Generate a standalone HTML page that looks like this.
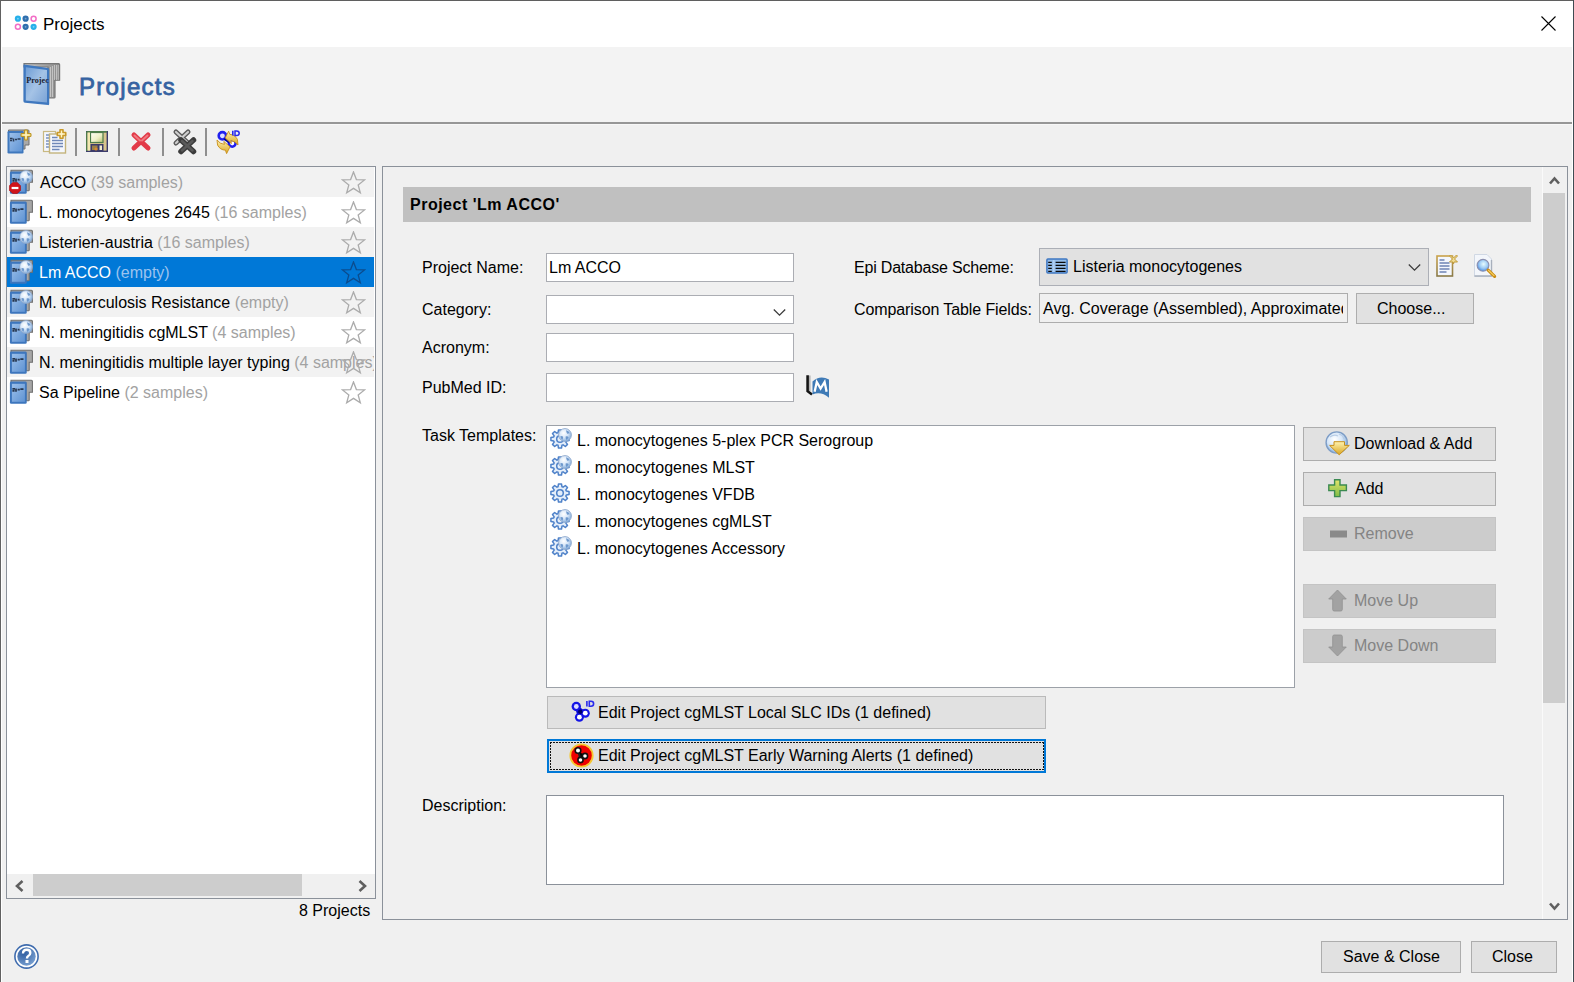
<!DOCTYPE html>
<html><head><meta charset="utf-8">
<style>
*{box-sizing:border-box;margin:0;padding:0}
html,body{width:1574px;height:982px;overflow:hidden;background:#f0f0f0;font-family:"Liberation Sans",sans-serif;font-size:16px;color:#000}
.a{position:absolute}
.t{position:absolute;line-height:20px;white-space:nowrap;font-size:16px}
.g{color:#a2a2a2}
.fld{position:absolute;background:#fff;border:1px solid #abadb3}
.btn{position:absolute;background:#e1e1e1;border:1px solid #adadad}
.dis{position:absolute;background:#cccccc;border:1px solid #c4c4c4}
.row{position:absolute;left:7px;width:367px;height:30px}
svg{position:absolute;overflow:visible;color:#acacac}
</style></head><body>
<svg width="0" height="0" style="position:absolute">
<defs>
<linearGradient id="gBlue" x1="0" y1="0" x2="1" y2="1"><stop offset="0" stop-color="#9cc0ea"/><stop offset="1" stop-color="#5f93d3"/></linearGradient>
<radialGradient id="gGlobe" cx="0.4" cy="0.35" r="0.7"><stop offset="0" stop-color="#ffffff"/><stop offset="0.5" stop-color="#d6e6f8"/><stop offset="1" stop-color="#7aa6d8"/></radialGradient>
<linearGradient id="gGold" x1="0" y1="0" x2="0" y2="1"><stop offset="0" stop-color="#fff3b0"/><stop offset="1" stop-color="#d9a520"/></linearGradient>
<radialGradient id="gHelp" cx="0.35" cy="0.3" r="0.8"><stop offset="0" stop-color="#2f5da0"/><stop offset="1" stop-color="#7ca3d3"/></radialGradient>
<symbol id="book" viewBox="0 0 25 26">
 <path d="M2 1.2 H22.4 Q23.4 1.2 23.4 2.2 V13.2 H20.2 V21 Q20.2 21.8 19.4 21.8 H17 V4 H2Z" fill="#a6a6a6" stroke="#6f6f6f" stroke-width="1.1"/>
 <rect x="0.9" y="2.6" width="16.8" height="22.2" rx="1.3" fill="#3d76bd"/>
 <rect x="2.9" y="4.8" width="13" height="18" fill="url(#gBlue)"/>
 <path d="M3.4 9.8h2.6M3.4 11.8h2.2M7 9.6v3.2M8.6 10.6h2.2M11.3 10.2h3.2" stroke="#26364e" stroke-width="1.7"/>
</symbol>
<symbol id="globe" viewBox="0 0 14 14">
 <circle cx="7" cy="7" r="6.4" fill="url(#gGlobe)" stroke="#8ea8cc" stroke-width="0.9"/>
 <path d="M2.2 8.5 Q4 7.2 5.2 9 L4.6 11.8 Q2.8 10.8 2.2 8.5Z M8 2.2 Q10.8 2.6 11.8 5.2 L9.2 5.8 Q8.4 4.2 8 2.2Z M7.6 8.4 Q9.8 7.6 10.6 9.6 L8.6 12 Q7.4 10.4 7.6 8.4Z" fill="#5d8cc6" opacity="0.85"/>
</symbol>
<symbol id="star" viewBox="0 0 25 25">
 <polygon points="12.50,0.90 15.38,8.54 23.53,8.92 17.16,14.01 19.32,21.88 12.50,17.40 5.68,21.88 7.84,14.01 1.47,8.92 9.62,8.54" fill="none" stroke="currentColor" stroke-width="1.3" stroke-linejoin="miter"/>
</symbol>
<symbol id="gear" viewBox="0 0 22 22">
 <polygon points="9.06,4.69 9.49,1.92 12.51,1.92 12.94,4.69 14.09,5.17 16.35,3.51 18.49,5.65 16.83,7.91 17.31,9.06 20.08,9.49 20.08,12.51 17.31,12.94 16.83,14.09 18.49,16.35 16.35,18.49 14.09,16.83 12.94,17.31 12.51,20.08 9.49,20.08 9.06,17.31 7.91,16.83 5.65,18.49 3.51,16.35 5.17,14.09 4.69,12.94 1.92,12.51 1.92,9.49 4.69,9.06 5.17,7.91 3.51,5.65 5.65,3.51 7.91,5.17" fill="#e4eefa" stroke="#4f82c9" stroke-width="1.5" stroke-linejoin="round"/>
 <circle cx="11" cy="11" r="3.3" fill="none" stroke="#4f82c9" stroke-width="1.5"/>
</symbol>
<symbol id="chev" viewBox="0 0 12 8"><path d="M1 1.5 L6 6.5 L11 1.5" fill="none" stroke="#444" stroke-width="1.3"/></symbol>
<symbol id="sarr" viewBox="0 0 11 9"><path d="M1 7.5 L5.5 2.5 L10 7.5" fill="none" stroke="#5f5f5f" stroke-width="2.6"/></symbol>
</defs></svg>
<!-- window frame -->
<div class="a" style="left:0;top:0;width:1574px;height:1px;background:#5f5f5f"></div>
<div class="a" style="left:0;top:0;width:1px;height:982px;background:#616161"></div>
<div class="a" style="left:1573px;top:0;width:1px;height:982px;background:#3f4b52"></div>
<div class="a" style="left:1px;top:1px;width:1px;height:981px;background:#fff"></div>
<div class="a" style="left:1572px;top:1px;width:1px;height:981px;background:#fff"></div>
<!-- title bar -->
<div class="a" style="left:1px;top:1px;width:1572px;height:46px;background:#fff"></div>
<div class="t" style="left:43px;top:15px;font-size:17px">Projects</div>
<!-- header -->
<div class="a" style="left:2px;top:47px;width:1570px;height:75px;background:#f3f3f3"></div>
<div class="t" style="left:79px;top:73px;font-size:24px;line-height:28px;color:#3562a1;-webkit-text-stroke:0.8px #3562a1;letter-spacing:1.3px">Projects</div>
<div class="a" style="left:2px;top:122px;width:1570px;height:2px;background:#969696"></div>
<div class="a" style="left:2px;top:124px;width:1570px;height:1px;background:#f7f7f7"></div>
<!-- toolbar separators -->
<div class="a" style="left:75px;top:128px;width:2px;height:28px;background:#8f8f8f"></div>
<div class="a" style="left:118px;top:128px;width:2px;height:28px;background:#8f8f8f"></div>
<div class="a" style="left:162px;top:128px;width:2px;height:28px;background:#8f8f8f"></div>
<div class="a" style="left:205px;top:128px;width:2px;height:28px;background:#8f8f8f"></div>


<!-- left panel -->
<div class="a" style="left:6px;top:166px;width:370px;height:733px;border:1px solid #8b919a;background:#fff"></div>
<div class="row" style="top:167px;background:#f2f2f2"></div>
<div class="row" style="top:227px;background:#f2f2f2"></div>
<div class="row" style="top:257px;background:#0078d7"></div>
<div class="row" style="top:287px;background:#f2f2f2"></div>
<div class="row" style="top:347px;background:#f2f2f2"></div>
<div class="t" style="left:40px;top:173px">ACCO <span class="g">(39 samples)</span></div>
<div class="t" style="left:39px;top:203px">L. monocytogenes 2645 <span class="g">(16 samples)</span></div>
<div class="t" style="left:39px;top:233px">Listerien-austria <span class="g">(16 samples)</span></div>
<div class="t" style="left:39px;top:263px;color:#fff">Lm ACCO <span style="color:#9cc3ee">(empty)</span></div>
<div class="t" style="left:39px;top:293px">M. tuberculosis Resistance <span class="g">(empty)</span></div>
<div class="t" style="left:39px;top:323px">N. meningitidis cgMLST <span class="g">(4 samples)</span></div>
<div class="t" style="left:39px;top:353px;width:335px;overflow:hidden">N. meningitidis multiple layer typing <span class="g">(4 samples)</span></div>
<div class="t" style="left:39px;top:383px">Sa Pipeline <span class="g">(2 samples)</span></div>
<!-- h scrollbar -->
<div class="a" style="left:7px;top:874px;width:368px;height:24px;background:#f0f0f0"></div>
<div class="a" style="left:33px;top:874px;width:269px;height:22px;background:#cdcdcd"></div>
<div class="t" style="left:299px;top:901px">8 Projects</div>

<!-- right panel -->
<div class="a" style="left:382px;top:166px;width:1186px;height:754px;border:1px solid #8b919a;background:#f0f0f0"></div>
<div class="a" style="left:1542px;top:167px;width:1px;height:752px;background:#fafafa"></div>
<div class="a" style="left:1543px;top:193px;width:22px;height:510px;background:#cdcdcd"></div>
<div class="a" style="left:403px;top:187px;width:1128px;height:35px;background:#c0c0c0"></div>
<div class="t" style="left:410px;top:195px;font-weight:bold;letter-spacing:0.5px">Project 'Lm ACCO'</div>

<div class="t" style="left:422px;top:258px">Project Name:</div>
<div class="t" style="left:422px;top:300px">Category:</div>
<div class="t" style="left:422px;top:338px">Acronym:</div>
<div class="t" style="left:422px;top:378px">PubMed ID:</div>
<div class="t" style="left:422px;top:426px">Task Templates:</div>
<div class="t" style="left:422px;top:796px">Description:</div>
<div class="t" style="left:854px;top:258px;letter-spacing:-0.2px">Epi Database Scheme:</div>
<div class="t" style="left:854px;top:300px;letter-spacing:-0.1px">Comparison Table Fields:</div>

<div class="fld" style="left:546px;top:253px;width:248px;height:29px"></div>
<div class="t" style="left:549px;top:258px">Lm ACCO</div>
<div class="fld" style="left:546px;top:295px;width:248px;height:29px"></div>
<div class="fld" style="left:546px;top:333px;width:248px;height:29px"></div>
<div class="fld" style="left:546px;top:373px;width:248px;height:29px"></div>

<div class="btn" style="left:1039px;top:248px;width:390px;height:38px;border-color:#acafb6"></div>
<div class="t" style="left:1073px;top:257px">Listeria monocytogenes</div>
<div class="a" style="left:1039px;top:293px;width:309px;height:30px;border:1px solid #adadad;background:#f0f0f0"></div>
<div class="a" style="left:1040px;top:294px;width:303px;height:28px;overflow:hidden"><div class="t" style="left:3px;top:5px">Avg. Coverage (Assembled), Approximated Genome Size</div></div>
<div class="btn" style="left:1356px;top:293px;width:118px;height:31px"></div>
<div class="t" style="left:1377px;top:299px">Choose...</div>

<div class="a" style="left:546px;top:425px;width:749px;height:263px;border:1px solid #9ca1a8;background:#fff"></div>
<div class="t" style="left:577px;top:431px">L. monocytogenes 5-plex PCR Serogroup</div>
<div class="t" style="left:577px;top:458px">L. monocytogenes MLST</div>
<div class="t" style="left:577px;top:485px">L. monocytogenes VFDB</div>
<div class="t" style="left:577px;top:512px">L. monocytogenes cgMLST</div>
<div class="t" style="left:577px;top:539px">L. monocytogenes Accessory</div>

<div class="btn" style="left:1303px;top:427px;width:193px;height:34px"></div>
<div class="t" style="left:1354px;top:434px">Download &amp; Add</div>
<div class="btn" style="left:1303px;top:472px;width:193px;height:34px"></div>
<div class="t" style="left:1355px;top:479px">Add</div>
<div class="dis" style="left:1303px;top:517px;width:193px;height:34px"></div>
<div class="t" style="left:1354px;top:524px;color:#848484">Remove</div>
<div class="dis" style="left:1303px;top:584px;width:193px;height:34px"></div>
<div class="t" style="left:1354px;top:591px;color:#848484">Move Up</div>
<div class="dis" style="left:1303px;top:629px;width:193px;height:34px"></div>
<div class="t" style="left:1354px;top:636px;color:#848484">Move Down</div>

<div class="btn" style="left:547px;top:696px;width:499px;height:33px;border-color:#bababa"></div>
<div class="t" style="left:598px;top:703px">Edit Project cgMLST Local SLC IDs (1 defined)</div>
<div class="a" style="left:547px;top:739px;width:499px;height:34px;border:2px solid #0078d7;background:#e1e1e1"></div>
<div class="a" style="left:550px;top:742px;width:494px;height:1px;background:radial-gradient(circle at 1px 0.5px,#111 0.8px,transparent 1.3px) 0 0/3px 1px repeat-x"></div><div class="a" style="left:550px;top:769px;width:494px;height:1px;background:radial-gradient(circle at 1px 0.5px,#111 0.8px,transparent 1.3px) 0 0/3px 1px repeat-x"></div><div class="a" style="left:550px;top:742px;width:1px;height:28px;background:radial-gradient(circle at 0.5px 1px,#111 0.8px,transparent 1.3px) 0 0/1px 3px repeat-y"></div><div class="a" style="left:1043px;top:742px;width:1px;height:28px;background:radial-gradient(circle at 0.5px 1px,#111 0.8px,transparent 1.3px) 0 0/1px 3px repeat-y"></div>
<div class="t" style="left:598px;top:746px">Edit Project cgMLST Early Warning Alerts (1 defined)</div>

<div class="a" style="left:546px;top:795px;width:958px;height:90px;border:1px solid #8b919a;background:#fff"></div>

<!-- bottom -->

<div class="btn" style="left:1321px;top:941px;width:140px;height:32px"></div>
<div class="t" style="left:1343px;top:947px">Save &amp; Close</div>
<div class="btn" style="left:1471px;top:941px;width:86px;height:32px"></div>
<div class="t" style="left:1492px;top:947px">Close</div>
<!-- icons -->
<svg style="left:14px;top:15px" width="24" height="16" viewBox="0 0 24 16">
<circle cx="3.9" cy="3.7" r="3.1" fill="#27b0ea"/><circle cx="3.9" cy="3.7" r="0.9" fill="#7fd2f4"/>
<circle cx="11.6" cy="3.7" r="3.1" fill="#2f6fae"/><circle cx="11.6" cy="3.7" r="0.9" fill="#7ba3cc"/>
<circle cx="19.6" cy="3.7" r="2.5" fill="#fff" stroke="#f26ec6" stroke-width="1.5"/>
<circle cx="3.9" cy="11.8" r="2.5" fill="#fff" stroke="#f26ec6" stroke-width="1.5"/>
<circle cx="11.6" cy="11.8" r="3.1" fill="#2f6fae"/><circle cx="11.6" cy="11.8" r="0.9" fill="#7ba3cc"/>
<circle cx="19.6" cy="11.8" r="3.1" fill="#27b0ea"/><circle cx="19.6" cy="11.8" r="0.9" fill="#7fd2f4"/>
</svg>
<svg style="left:1541px;top:16px" width="15" height="15"><path d="M0.5 0.5L14.5 14.5M14.5 0.5L0.5 14.5" stroke="#000" stroke-width="1.1"/></svg>
<svg style="left:22px;top:62px" width="40" height="45" viewBox="0 0 40 45">
<defs><linearGradient id="gPages" x1="0" y1="0" x2="1" y2="0"><stop offset="0" stop-color="#c8c8c8"/><stop offset="1" stop-color="#8a8a8a"/></linearGradient>
<linearGradient id="gFront" x1="0" y1="0" x2="1" y2="1"><stop offset="0" stop-color="#6f9ed6"/><stop offset="0.5" stop-color="#a5c3e6"/><stop offset="1" stop-color="#7aa3d6"/></linearGradient></defs>
<path d="M2 1.6 H36.6 Q37.6 1.6 37.6 2.6 V18.2 H33 V35.2 Q33 36 32 36 H26 V5 H2Z" fill="url(#gPages)" stroke="#777" stroke-width="1.2"/>
<path d="M28.5 5 V35 M30.5 4 V35 M32.5 3 V18 M34.5 3 V18 M36.2 3 V18" stroke="#e8e8e8" stroke-width="0.7" opacity="0.8"/>
<path d="M2.2 2.6 L26 6 Q27.2 6.2 27.2 7.4 V42 Q27.2 43.3 26 43.1 L3 40.8 Q1.4 40.6 1.4 39 V3.6 Q1.4 2.5 2.2 2.6Z" fill="#3f78bf"/>
<path d="M3.8 5.2 L25 8 V40.6 L3.8 38.6Z" fill="url(#gFront)"/>
<text x="4.3" y="21" font-family="Liberation Serif" font-size="8.5" font-weight="bold" fill="#1a2232" textLength="22.5" lengthAdjust="spacingAndGlyphs">Projec</text>
</svg>
<svg style="left:7px;top:129px" width="24" height="25" viewBox="0 0 24 25">
 <path d="M1.5 1 H21 Q22 1 22 2 V16 H18 V20 H16 V3 H1.5Z" fill="#a9a9a9" stroke="#727272" stroke-width="1"/>
 <rect x="0.5" y="2" width="16" height="22.5" rx="1.2" fill="#3f78bd"/>
 <rect x="2.5" y="4" width="12.5" height="18.5" fill="url(#gBlue)"/>
 <path d="M3 9.5h2.5M3 11.5h2M6.5 9.5v3M8 10.5h2M10.5 10h3" stroke="#2a3b55" stroke-width="1.6"/>
 <path d="M17.6 1 H20.4 V4.6 H24 V7.4 H20.4 V11 H17.6 V7.4 H14 V4.6 H17.6Z" fill="#f3dc80" stroke="#b8901c" stroke-width="1" stroke-linejoin="round"/><path d="M19 2.5 V9.5 M15.5 6 H22.5" stroke="#fff8d0" stroke-width="1"/>
</svg>
<svg style="left:43px;top:129px" width="24" height="25" viewBox="0 0 24 25">
 <rect x="0.5" y="2.5" width="12" height="20" fill="#f4f7fd" stroke="#c9b981" stroke-width="1.2"/>
 <path d="M3 6h5M3 9h5M3 12h5M3 15h5M3 18h5" stroke="#7a92c0" stroke-width="1.3"/>
 <rect x="6.5" y="5" width="16" height="19" fill="#f4f7fd" stroke="#c4b47c" stroke-width="1.4"/>
 <path d="M9 8.5h5.5M9 11.5h11M9 14.5h11M9 17.5h11M9 20.5h7.5" stroke="#6f88b8" stroke-width="1.4"/>
 <path d="M17 0.8 H20 V3.5 H22.7 V6.5 H20 V9.2 H17 V6.5 H14.3 V3.5 H17Z" fill="#fff4c8" stroke="#c99a2a" stroke-width="1.6" stroke-linejoin="round"/>
</svg>
<svg style="left:86px;top:131px" width="22" height="21" viewBox="0 0 22 21">
 <rect x="0.7" y="0.7" width="20.6" height="19.6" fill="#d8c48c" stroke="#3c3c6c" stroke-width="1.4"/>
 <path d="M0.7 0.7 V20 M0.7 0.7 H21" stroke="#4d7c4b" stroke-width="1.4"/>
 <defs><linearGradient id="gLbl" x1="0" y1="0" x2="1" y2="1"><stop offset="0" stop-color="#fffef6"/><stop offset="0.55" stop-color="#eef0c8"/><stop offset="1" stop-color="#b8c070"/></linearGradient></defs><rect x="4.5" y="1.5" width="12.5" height="10" fill="url(#gLbl)" stroke="#4d7c4b" stroke-width="1.2"/>
 <rect x="4.5" y="13" width="13" height="7" fill="#3a3a6a"/>
 <rect x="6" y="14.5" width="5.5" height="4.5" fill="#9a8048"/><circle cx="10" cy="18" r="1.6" fill="#d88a30"/>
 <rect x="13.5" y="14.5" width="2.5" height="4.5" fill="#f2eccb"/>
 <rect x="1.5" y="1.5" width="2.5" height="18" fill="#f2e9b0"/>
</svg>
<svg style="left:131px;top:132px" width="20" height="19" viewBox="0 0 20 19">
 <path d="M3 3 L17 16 M17 3 L3 16" stroke="#e23a48" stroke-width="5" stroke-linecap="round"/>
 <path d="M3.5 3.5 L9 8.5 M16.5 3.5 L11 8.5" stroke="#f07a80" stroke-width="2" stroke-linecap="round"/>
</svg>
<svg style="left:173px;top:129px" width="24" height="25" viewBox="0 0 24 25">
 <path d="M3 3 L15 14 M15 3 L3 14" stroke="#5a5a5a" stroke-width="5" stroke-linecap="round"/>
 <path d="M3 3 L15 14 M15 3 L3 14" stroke="#cfcfcf" stroke-width="2.2" stroke-linecap="round"/>
 <path d="M8 11 L20.5 22.5 M20.5 11 L8 22.5" stroke="#3c3c3c" stroke-width="5.5" stroke-linecap="round"/>
 <path d="M9 12 L19.5 21.5 M19.5 12 L9 21.5" stroke="#5a5a5a" stroke-width="2.5" stroke-linecap="round"/>
</svg>
<svg style="left:216px;top:130px" width="25" height="25" viewBox="0 0 25 25">
 <circle cx="6.4" cy="5.8" r="3.7" fill="#dcdcff" stroke="#2020ee" stroke-width="2.6"/>
 <circle cx="16.2" cy="13.3" r="3.4" fill="#fff" stroke="#2020ee" stroke-width="2.6"/>
 <path d="M8.5 8.5 L13.5 12" stroke="#0000a0" stroke-width="3"/>
 <path d="M9.2 8 L12.6 1.2 L13.8 4.4 Q19 4.6 21.4 9.4 L22 15 Q19.2 11.2 14.8 10.6 L15.4 13.6 Z" fill="url(#gGold)" stroke="#c8901c" stroke-width="0.9" stroke-linejoin="round"/>
 <path d="M14 16.8 L10.6 23.6 L9.4 20.2 Q4.2 20 1.6 15.2 L1 10 Q3.8 14 8.4 14.4 L7.8 11.4 Z" fill="url(#gGold)" stroke="#c8901c" stroke-width="0.9" stroke-linejoin="round"/>
 <path d="M16.8 0.8 V5.6" stroke="#2a2aee" stroke-width="1.6"/>
 <path d="M19 0.9 H20.6 Q23.2 0.9 23.2 3.2 Q23.2 5.5 20.6 5.5 H19Z" fill="none" stroke="#2a2aee" stroke-width="1.5"/>
</svg>
<svg style="left:9px;top:169px" width="25" height="26"><use href="#book"/></svg>
<svg style="left:19px;top:170px" width="14" height="14"><use href="#globe"/></svg>
<svg style="left:341px;top:171px" width="25" height="25"><use href="#star"/></svg>
<svg style="left:9px;top:199px" width="25" height="26"><use href="#book"/></svg>
<svg style="left:341px;top:201px" width="25" height="25"><use href="#star"/></svg>
<svg style="left:9px;top:229px" width="25" height="26"><use href="#book"/></svg>
<svg style="left:19px;top:230px" width="14" height="14"><use href="#globe"/></svg>
<svg style="left:341px;top:231px" width="25" height="25"><use href="#star"/></svg>
<svg style="left:9px;top:259px" width="25" height="26"><use href="#book"/></svg>
<svg style="left:19px;top:260px" width="14" height="14"><use href="#globe"/></svg>
<svg style="left:341px;top:261px;color:#0b4c8e" width="25" height="25"><use href="#star"/></svg>
<svg style="left:9px;top:289px" width="25" height="26"><use href="#book"/></svg>
<svg style="left:19px;top:290px" width="14" height="14"><use href="#globe"/></svg>
<svg style="left:341px;top:291px" width="25" height="25"><use href="#star"/></svg>
<svg style="left:9px;top:319px" width="25" height="26"><use href="#book"/></svg>
<svg style="left:19px;top:320px" width="14" height="14"><use href="#globe"/></svg>
<svg style="left:341px;top:321px" width="25" height="25"><use href="#star"/></svg>
<svg style="left:9px;top:349px" width="25" height="26"><use href="#book"/></svg>
<svg style="left:341px;top:351px" width="25" height="25"><use href="#star"/></svg>
<svg style="left:9px;top:379px" width="25" height="26"><use href="#book"/></svg>
<svg style="left:341px;top:381px" width="25" height="25"><use href="#star"/></svg>
<svg style="left:9px;top:182px" width="12" height="12" viewBox="0 0 13 13"><polygon points="4,0.5 9,0.5 12.5,4 12.5,9 9,12.5 4,12.5 0.5,9 0.5,4" fill="#d0141a" stroke="#a00" stroke-width="0.6"/><rect x="2.8" y="5.3" width="7.4" height="2.4" fill="#fff"/></svg>
<svg style="left:14px;top:880px" width="11" height="12" viewBox="0 0 11 12"><path d="M8.5 1 L3 6 L8.5 11" fill="none" stroke="#5f5f5f" stroke-width="2.6"/></svg>
<svg style="left:357px;top:880px" width="11" height="12" viewBox="0 0 11 12"><path d="M2.5 1 L8 6 L2.5 11" fill="none" stroke="#5f5f5f" stroke-width="2.6"/></svg>
<svg style="left:1549px;top:176px" width="11" height="9"><use href="#sarr"/></svg>
<svg style="left:1549px;top:902px" width="11" height="9" viewBox="0 0 11 9"><path d="M1 1.5 L5.5 6.5 L10 1.5" fill="none" stroke="#5f5f5f" stroke-width="2.6"/></svg>
<svg style="left:773px;top:308px" width="13" height="9" viewBox="0 0 13 9"><path d="M0.8 1.5 L6.5 7.2 L12.2 1.5" fill="none" stroke="#3c3c3c" stroke-width="1.3"/></svg>
<svg style="left:1408px;top:263px" width="13" height="9" viewBox="0 0 13 9"><path d="M0.8 1.5 L6.5 7.2 L12.2 1.5" fill="none" stroke="#3c3c3c" stroke-width="1.3"/></svg>
<svg style="left:1046px;top:258px" width="22" height="16" viewBox="0 0 22 16">
 <rect x="0.9" y="0.9" width="20.2" height="14.2" rx="1" fill="#94bdea" stroke="#3f78c2" stroke-width="1.5"/><path d="M7.8 2 V14" stroke="#b8d4f4" stroke-width="1.2"/>
 <path d="M2.2 4.3h3.6M2.2 7.3h3.6M2.2 10.3h3.6M2.2 13.3h3.6M9.6 4.3h10M9.6 7.3h10M9.6 10.3h10M9.6 13.3h10" stroke="#0a0a0a" stroke-width="1.3"/>
</svg>
<svg style="left:1436px;top:254px" width="23" height="23" viewBox="0 0 23 23">
 <defs><linearGradient id="gDocB" x1="0" y1="0" x2="0" y2="1"><stop offset="0" stop-color="#c9a24a"/><stop offset="1" stop-color="#8a7a48"/></linearGradient></defs>
 <rect x="1" y="2" width="15.5" height="20" fill="#f4f7fd" stroke="url(#gDocB)" stroke-width="1.6"/>
 <path d="M3.5 6h5M3.5 9h10M3.5 12h10M3.5 15h10M3.5 18h7" stroke="#6d84b4" stroke-width="1.3"/>
 <path d="M14.5 1 L17.5 4 L20.5 1 L21.5 2 L18.5 5 L21.5 8 L18 8 L17.5 10 L17 8 L13.5 8 L16.5 5 L13.5 2Z" fill="#f1dc90" stroke="#c09a3a" stroke-width="1" stroke-linejoin="round"/>
</svg>
<svg style="left:1474px;top:254px" width="24" height="25" viewBox="0 0 24 25">
 <defs><radialGradient id="gLens" cx="0.55" cy="0.4" r="0.6"><stop offset="0" stop-color="#e6fbff"/><stop offset="0.6" stop-color="#9ccaf4"/><stop offset="1" stop-color="#4f8ee0"/></radialGradient></defs>
 <path d="M0.5 0.5 H13 L17.5 5 V22.5 H0.5Z" fill="#f3f6fb" stroke="#d0d8e4" stroke-width="1"/>
 <path d="M0.5 22 H17.5 V6" fill="none" stroke="#a8b0bc" stroke-width="1.4"/>
 <circle cx="9" cy="11.3" r="5.9" fill="url(#gLens)" stroke="#8a90b0" stroke-width="1.1"/>
 <path d="M14.2 16.2 L20.6 22.4" stroke="#c88a10" stroke-width="3.2" stroke-linecap="round"/>
 <path d="M14.6 16.4 L20 21.6" stroke="#f7d060" stroke-width="1.3" stroke-linecap="round"/>
</svg>
<svg style="left:806px;top:374px" width="24" height="25" viewBox="0 0 24 25">
 <path d="M3.8 1.5 V17.5" stroke="#b0b0b0" stroke-width="1.5"/>
 <path d="M1.6 1.2 V17.2 L6 20.5" fill="none" stroke="#151515" stroke-width="2.6"/>
 <path d="M6.5 7.5 Q14 0.5 23 5.5 V23.8 Q15 17 6.5 20.5Z" fill="#3e7ab6"/>
 <path d="M8.6 17.8 L10.8 8 L14.6 14.5 L18.6 8 L20.6 17.8" fill="none" stroke="#fff" stroke-width="2.3" stroke-linejoin="miter"/>
</svg>
<svg style="left:549px;top:428px" width="22" height="22"><use href="#gear"/></svg>
<svg style="left:558px;top:428px" width="14" height="14"><use href="#globe"/></svg>
<svg style="left:549px;top:455px" width="22" height="22"><use href="#gear"/></svg>
<svg style="left:558px;top:455px" width="14" height="14"><use href="#globe"/></svg>
<svg style="left:549px;top:482px" width="22" height="22"><use href="#gear"/></svg>
<svg style="left:549px;top:509px" width="22" height="22"><use href="#gear"/></svg>
<svg style="left:558px;top:509px" width="14" height="14"><use href="#globe"/></svg>
<svg style="left:549px;top:536px" width="22" height="22"><use href="#gear"/></svg>
<svg style="left:558px;top:536px" width="14" height="14"><use href="#globe"/></svg>
<svg style="left:1325px;top:431px" width="25" height="25" viewBox="0 0 25 25">
 <circle cx="11.7" cy="11.5" r="10.6" fill="url(#gGlobe)" stroke="#7d9dc6" stroke-width="1.4"/>
 <path d="M5 6 Q9 3 13 5 M14 3 Q18 4 19 8" fill="none" stroke="#b8cde6" stroke-width="1.2"/>
 <path d="M9 10.7 H19.5 V14.4 H24.3 L14.2 23.8 L4.6 14.4 H9Z" fill="url(#gGold)" stroke="#c8901c" stroke-width="1"/>
</svg>
<svg style="left:1328px;top:479px" width="19" height="19" viewBox="0 0 19 19">
 <defs><linearGradient id="gPlus" x1="0" y1="0" x2="0" y2="1"><stop offset="0" stop-color="#e4e56c"/><stop offset="1" stop-color="#7fbc46"/></linearGradient></defs>
 <path d="M6.6 0.8 H12 V6 H18.4 V11.6 H12 V17.6 H6.6 V11.6 H0.8 V6 H6.6Z" fill="url(#gPlus)" stroke="#3b8a52" stroke-width="1.4"/>
</svg>
<svg style="left:1330px;top:530px" width="17" height="8"><rect x="0" y="0.5" width="17" height="7" fill="#8a8a8a"/></svg>
<svg style="left:1328px;top:589px" width="19" height="23" viewBox="0 0 19 23">
 <path d="M9.5 1 L18.3 10 H14.3 V20.5 Q14.3 22 12.8 22 H6.2 Q4.7 22 4.7 20.5 V10 H0.7Z" fill="#a2a2a2" stroke="#909090" stroke-width="0.8"/>
</svg>
<svg style="left:1328px;top:634px" width="19" height="23" viewBox="0 0 19 23">
 <path d="M9.5 22 L18.3 13 H14.3 V2.5 Q14.3 1 12.8 1 H6.2 Q4.7 1 4.7 2.5 V13 H0.7Z" fill="#a2a2a2" stroke="#909090" stroke-width="0.8"/>
</svg>
<svg style="left:571px;top:700px" width="25" height="24" viewBox="0 0 25 24">
 <polygon points="5.3,6.5 14.3,13.2 8.4,17.2" fill="#0a0ad0" stroke="#0a0ad0" stroke-width="3" stroke-linejoin="round"/>
 <circle cx="5.3" cy="6.5" r="4.7" fill="#1414e6"/>
 <circle cx="14.3" cy="13.2" r="4.5" fill="#1414e6"/>
 <circle cx="8.4" cy="17.2" r="4.5" fill="#1414e6"/>
 <circle cx="9.2" cy="11.8" r="2.2" fill="#000070"/>
 <circle cx="5.3" cy="6.5" r="2.4" fill="#dcdcff"/>
 <circle cx="14.3" cy="13.2" r="2.4" fill="#fff"/>
 <circle cx="8.4" cy="17.2" r="2.4" fill="#fff"/>
 <path d="M15.9 1 V6.4" stroke="#2a2aee" stroke-width="1.6"/>
 <path d="M18.3 1.2 H20 Q22.6 1.2 22.6 3.7 Q22.6 6.2 20 6.2 H18.3Z" fill="none" stroke="#2a2aee" stroke-width="1.6"/>
</svg>
<svg style="left:569px;top:743px" width="25" height="25" viewBox="0 0 25 25">
 <circle cx="12.5" cy="12.5" r="11.2" fill="#ee0000" stroke="#f6c830" stroke-width="1.8"/>
 <path d="M9 7.5 L11.5 16.5 L16 13" stroke="#222" stroke-width="2"/>
 <circle cx="9" cy="7.5" r="2.8" fill="#fff" stroke="#111" stroke-width="1.6"/>
 <circle cx="16" cy="13" r="2.6" fill="#fff" stroke="#111" stroke-width="1.6"/>
 <circle cx="11.5" cy="17" r="2.6" fill="#fff" stroke="#111" stroke-width="1.6"/>
</svg>
<svg style="left:14px;top:944px" width="25" height="25" viewBox="0 0 25 25">
 <circle cx="12.5" cy="12.5" r="11.6" fill="#fff" stroke="#3f6cae" stroke-width="1.6"/>
 <circle cx="12.5" cy="12.5" r="9.2" fill="url(#gHelp)"/>
 <path d="M9 9.5 Q9 5.8 12.8 5.8 Q16.3 5.8 16.3 9 Q16.3 11 14 12.2 Q13 12.8 13 14.5" fill="none" stroke="#fff" stroke-width="2.4"/>
 <rect x="11.5" y="16" width="3" height="3" fill="#fff"/>
</svg>
</body></html>
